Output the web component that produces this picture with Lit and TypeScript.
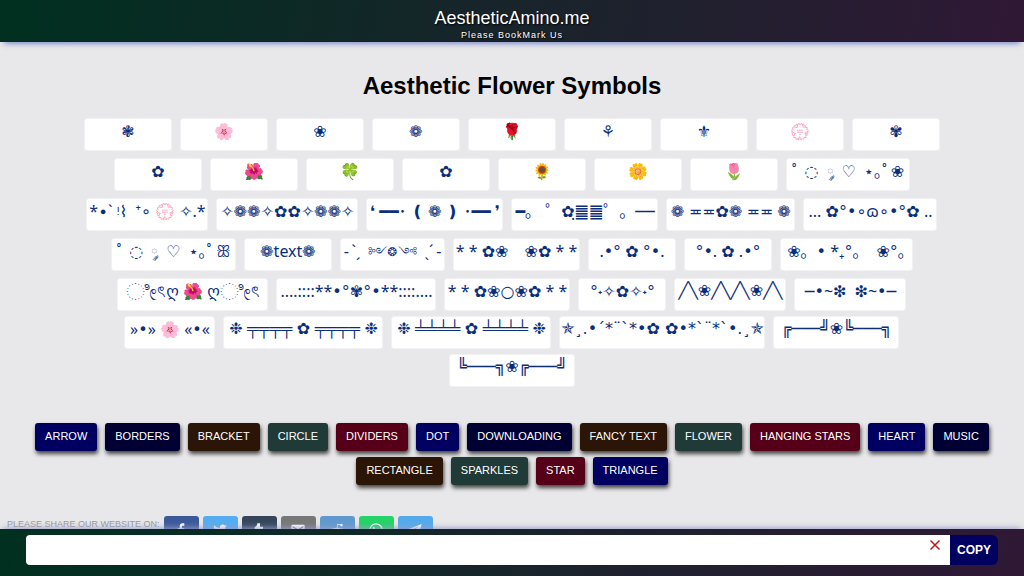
import { LitElement, html, css, svg } from "lit";
import { customElement, state } from "lit/decorators.js";
import { classMap } from "lit/directives/class-map.js";

interface SymbolItem { text: string; width?: number; wide?: boolean; dejavu?: boolean }

const plain = (...texts: string[]): SymbolItem[] => texts.map((text) => ({ text }));

const SYMBOLS: SymbolItem[] = [
  ...plain("❃", "🌸", "❀", "❁", "🌹", "⚘", "⚜", "💮", "✾"),
  ...plain("✿", "🌺", "🍀", "✿", "🌻", "🌼", "🌷"),
  { text: "˚\u2002◌\u2002༘\u2002♡\u2002⋆｡˚\u00a0❀", width: 124 },
  { text: "*∙ˋ ᵎ⌇\u2002⁺∘ 💮 ✧.*", width: 122 },
  { text: "✧❁❁✧✿✿✧❁❁✧", width: 142 },
  { text: "❛ ━━･ ❪ ❁ ❫ ･━━ ❜", width: 137 },
  { text: "━｡ \u2002゜✿ฺ䷀䷀゜。──", width: 147 },
  { text: "❁ ≖≖✿❁ ≖≖ ❁", width: 129 },
  { text: "... ✿°•∘ɷ∘•°✿ ..", width: 134 },
  { text: "˚\u2002◌\u2002༘\u2002♡\u2002⋆｡˚\u00a0ꕥ", width: 125 },
  { text: "❁text❁" },
  { text: "-\u2009ˋˏ\u2002༻❂༺\u2002ˎˊ\u2009-", width: 105 },
  { text: "* * ✿❀\u2003❀✿ * *", width: 127 },
  { text: ".•° ✿ °•." },
  { text: "°•. ✿ .•°" },
  { text: "❀｡\u2002• *₊°｡\u2003❀°｡", width: 133 },
  { text: "ೀৎღ 🌺 ღೀৎ", width: 151 },
  { text: "....::::**•°✾°•**::::....", width: 160 },
  { text: "* * ✿❀○❀✿ * *", width: 126 },
  { text: "°˖✧✿✧˖°" },
  { text: "╱╲❀╱╲╱╲❀╱╲", width: 112, wide: true },
  { text: "─•~❇\u2002❇~•─", width: 112 },
];

const FRAMES: SymbolItem[] = [
  { text: "»•» 🌸 «•«", width: 91 },
  { text: "❉ ╤╤╤╤ ✿ ╤╤╤╤ ❉", width: 160, wide: true },
  { text: "❉ ╧╧╧╧ ✿ ╧╧╧╧ ❉", width: 160, wide: true },
  { text: "✯¸.•´*¨`*•✿ ✿•*`¨*`•.¸✯", width: 206, dejavu: true },
  { text: "╔───╝❀╚───╗", width: 126, dejavu: true },
  { text: "╚───╗❀╔───╝", width: 126, dejavu: true },
];

// Glyph runs that need their own face or size inside a symbol.
const RUNS = /([•°♡◌○䷀]+|༘|༻❂༺|ೀ)/;
const runClass = (run: string) => (/[༘༻]/.test(run) ? "small" : run === "ೀ" ? "large" : "round");

const CATEGORIES: [string, string][] = [
  ["Arrow", "blue"], ["Borders", "navy"], ["Bracket", "brown"], ["Circle", "green"], ["Dividers", "wine"],
  ["Dot", "blue"], ["Downloading", "navy"], ["Fancy Text", "brown"], ["Flower", "green"],
  ["Hanging Stars", "wine"], ["Heart", "blue"], ["Music", "navy"], ["Rectangle", "brown"],
  ["Sparkles", "green"], ["Star", "wine"], ["Triangle", "blue"],
];

const SHARES = [
  { name: "Facebook", cls: "facebook", icon: svg`<path d="M13.5 22v-9h3l.5-3.6h-3.500V7.200c0-1 .4-1.700 1.800-1.700H17V2.200C16.600 2.100 15.600 2 14.500 2 11.800 2 10 3.600 10 6.700v2.700H7V13h3v9z"/>` },
  { name: "Twitter", cls: "twitter", icon: svg`<path d="M22 5.900c-.7.300-1.500.500-2.400.7.900-.5 1.500-1.300 1.800-2.300-.8.500-1.700.8-2.600 1a4.100 4.100 0 0 0-7 3.700C8.400 8.800 5.400 7.200 3.400 4.700a4.100 4.100 0 0 0 1.300 5.500c-.7 0-1.300-.2-1.900-.5 0 2 1.400 3.700 3.300 4.100-.6.200-1.200.2-1.900.1a4.100 4.100 0 0 0 3.900 2.800A8.300 8.300 0 0 1 2 18.400 11.600 11.600 0 0 0 20 8c.8-.600 1.500-1.300 2-2.100z"/>` },
  { name: "Tumblr", cls: "tumblr", icon: svg`<path d="M9.500 2h4v5H18v4h-4.500v4.500c0 2 .3 2.800 2 2.800.9 0 1.700-.2 2.500-.7v3.300c-1.300.7-2.400 1-4 1-3.300 0-5-1.700-5-4.700V11H5.500V7.500C8 7 9.300 5 9.500 2z"/>` },
  { name: "Email", cls: "email", icon: svg`<path d="M20 4H4a2 2 0 0 0-2 2v12a2 2 0 0 0 2 2h16a2 2 0 0 0 2-2V6a2 2 0 0 0-2-2zm0 4-8 5-8-5V6l8 5 8-5z"/>` },
  { name: "Reddit", cls: "reddit", icon: svg`<path d="M22 11.800a2.300 2.300 0 0 0-3.900-1.600 11 11 0 0 0-5.600-1.700l1-4.300 3.400.8a1.800 1.800 0 1 0 .2-1.200l-4.200-1-1.300 5.700a11 11 0 0 0-5.700 1.700A2.300 2.300 0 1 0 3.300 14c-.4 3.900 3.700 7 8.700 7s9.100-3.100 8.700-7c.8-.4 1.300-1.200 1.300-2.200zM7 13.500a1.500 1.500 0 1 1 3 0 1.500 1.500 0 0 1-3 0zm8.400 4c-1.800 1.700-5 1.700-6.800 0l.7-.7c1.400 1.300 4 1.300 5.400 0zm.1-2.500a1.500 1.500 0 1 1 0-3 1.500 1.500 0 0 1 0 3z"/>` },
  { name: "WhatsApp", cls: "whatsapp", icon: svg`<path d="M12 2a10 10 0 0 0-8.600 15L2 22l5.200-1.400A10 10 0 1 0 12 2zm0 1.800a8.200 8.200 0 1 1-4.600 15l-2.900.8.800-2.800A8.200 8.200 0 0 1 12 3.800zM8.300 7.300c-.5 0-1.300.8-1.300 2.200 0 2.700 4.700 7.700 8.400 7.200 1.300-.2 2-1.100 2-2.200l-2.700-1.300-1.200 1.400c-1.800-.7-3-2-3.700-3.300l.9-1.200-1.100-2.700z"/>` },
  { name: "Telegram", cls: "telegram", icon: svg`<path d="M22 3 1.500 11l5.200 2L18 5.800 9 14v6l3.100-3.700L17.500 20z"/>` },
];

@customElement("app-root")
export class AppRoot extends LitElement {
  @state() private value = "";

  static styles = css`
    :host {
      display: flex; flex-direction: column; height: 100vh; overflow: hidden;
      background: #e8e8ea; font: 16px "Liberation Sans", Arial, sans-serif;
    }
    .bar { background: linear-gradient(100deg, #003020, #301835); flex: none; }
    header {
      color: #fff; text-align: center; padding: 7px 0 0;
      box-shadow: 0 5px 6px -4px #6878c0; text-shadow: 1px 1px 2px #000;
    }
    .site { display: block; font-size: 18px; line-height: 22px; color: #fff; text-decoration: none; }
    .tagline { margin: 0; font-size: 9px; line-height: 13px; letter-spacing: 1px; }
    main { flex: 1; min-height: 0; overflow: hidden; }
    h1 { margin: 30px 0 18px; font-size: 24px; line-height: 28px; text-align: center; color: #000; }
    .symbols {
      width: 85%; margin: 0 auto; display: flex; flex-wrap: wrap; justify-content: center; gap: 7px 8px;
    }
    .frames { margin-top: 5px; row-gap: 5px; }
    .symbol {
      box-sizing: border-box; min-width: 88px; height: 33px; padding: 0 0 8px; border: 1px solid #f2f2f4;
      border-radius: 3px; background: #fff; color: #0b2e7a; white-space: nowrap; cursor: pointer;
      display: flex; justify-content: center; align-items: center;
      font: 16px/22px "Noto Sans", "DejaVu Sans", "Liberation Sans", "Noto Sans CJK JP", sans-serif;
    }
    .wide { font-family: "Liberation Sans", "DejaVu Sans", sans-serif; }
    .dejavu, .round { font-family: "DejaVu Sans", sans-serif; }
    .round, .small, .large { line-height: 0; }
    .small { font-size: 12px; vertical-align: 1px; }
    .large { font-size: 24px; vertical-align: -3px; }
    .categories { margin: 36px 24px 31px; display: flex; flex-wrap: wrap; justify-content: center; gap: 6px 8px; }
    .category {
      padding: 0 10px 2px; border-radius: 3px; color: #fff; font-size: 11px; line-height: 26px;
      text-transform: uppercase; text-decoration: none; box-shadow: 1px 3px 4px #444;
    }
    .blue { background: #000060; } .navy { background: #000033; } .brown { background: #2a1506; }
    .green { background: #203a38; } .wine { background: #550018; }
    .share { display: flex; gap: 4px; padding-left: 7px; }
    .share-label { font-size: 9px; line-height: 17px; color: #999; text-transform: uppercase; }
    .share-link { width: 35px; height: 28px; border-radius: 3px; display: grid; place-items: center; }
    .share-link svg { width: 16px; height: 16px; fill: #fff; }
    .facebook { background: #3b5998; } .twitter { background: #55acee; } .tumblr { background: #35465c; }
    .email { background: #777; } .reddit { background: #5f99cf; } .whatsapp { background: #25d366; }
    .telegram { background: #54a9eb; }
    .copybar {
      position: relative; display: flex; padding: 6px 26px 11px; box-shadow: 0 -4px 6px -3px #9aa0cc;
    }
    .field { flex: 1; position: relative; display: flex; }
    input {
      flex: 1; min-width: 0; height: 30px; box-sizing: border-box; border: 0; border-radius: 4px 0 0 4px;
      padding: 0 32px 0 8px; font-size: 16px; background: #fff; outline: none;
    }
    .clear { position: absolute; right: 8px; top: 3px; width: 14px; height: 14px; padding: 0; border: 0; background: none; }
    .clear svg { display: block; width: 14px; height: 14px; stroke: #c01818; stroke-width: 1.5; }
    .copy {
      width: 48px; border: 0; padding: 0; border-radius: 0 6px 6px 0; background: #000060; color: #fff;
      font: bold 12px "Liberation Sans", Arial, sans-serif;
    }
  `;

  private renderText(text: string) {
    return html`<span>${text.split(RUNS).map((run, i) => (i % 2 ? html`<span class=${runClass(run)}>${run}</span>` : run))}</span>`;
  }

  private renderSymbols(items: SymbolItem[]) {
    return items.map((s) => html`<button
      class=${classMap({ symbol: true, wide: !!s.wide, dejavu: !!s.dejavu })}
      style="width:${s.width ?? 88}px"
      @click=${() => (this.value += s.text)}>${this.renderText(s.text)}</button>`);
  }

  render() {
    return html`
      <header class="bar">
        <a class="site" href="#">AestheticAmino.me</a>
        <p class="tagline">Please BookMark Us</p>
      </header>
      <main>
        <h1>Aesthetic Flower Symbols</h1>
        <div class="symbols">${this.renderSymbols(SYMBOLS)}</div>
        <div class="symbols frames">${this.renderSymbols(FRAMES)}</div>
        <nav class="categories">
          ${CATEGORIES.map(([name, color]) => html`<a class="category ${color}" href="#">${name}</a>`)}
        </nav>
        <div class="share">
          <span class="share-label">Please share our website on:</span>
          ${SHARES.map((s) => html`<a class="share-link ${s.cls}" href="#" aria-label=${s.name}><svg viewBox="0 0 24 24">${s.icon}</svg></a>`)}
        </div>
      </main>
      <footer class="bar copybar">
        <div class="field">
          <input type="text" aria-label="Selected symbols" .value=${this.value}
            @input=${(e: Event) => (this.value = (e.target as HTMLInputElement).value)} />
          <button class="clear" aria-label="Clear" @click=${() => (this.value = "")}>
            <svg viewBox="0 0 14 14"><path d="M2.500 2.500l9 9M11.500 2.500l-9 9"/></svg>
          </button>
        </div>
        <button class="copy">COPY</button>
      </footer>`;
  }
}
